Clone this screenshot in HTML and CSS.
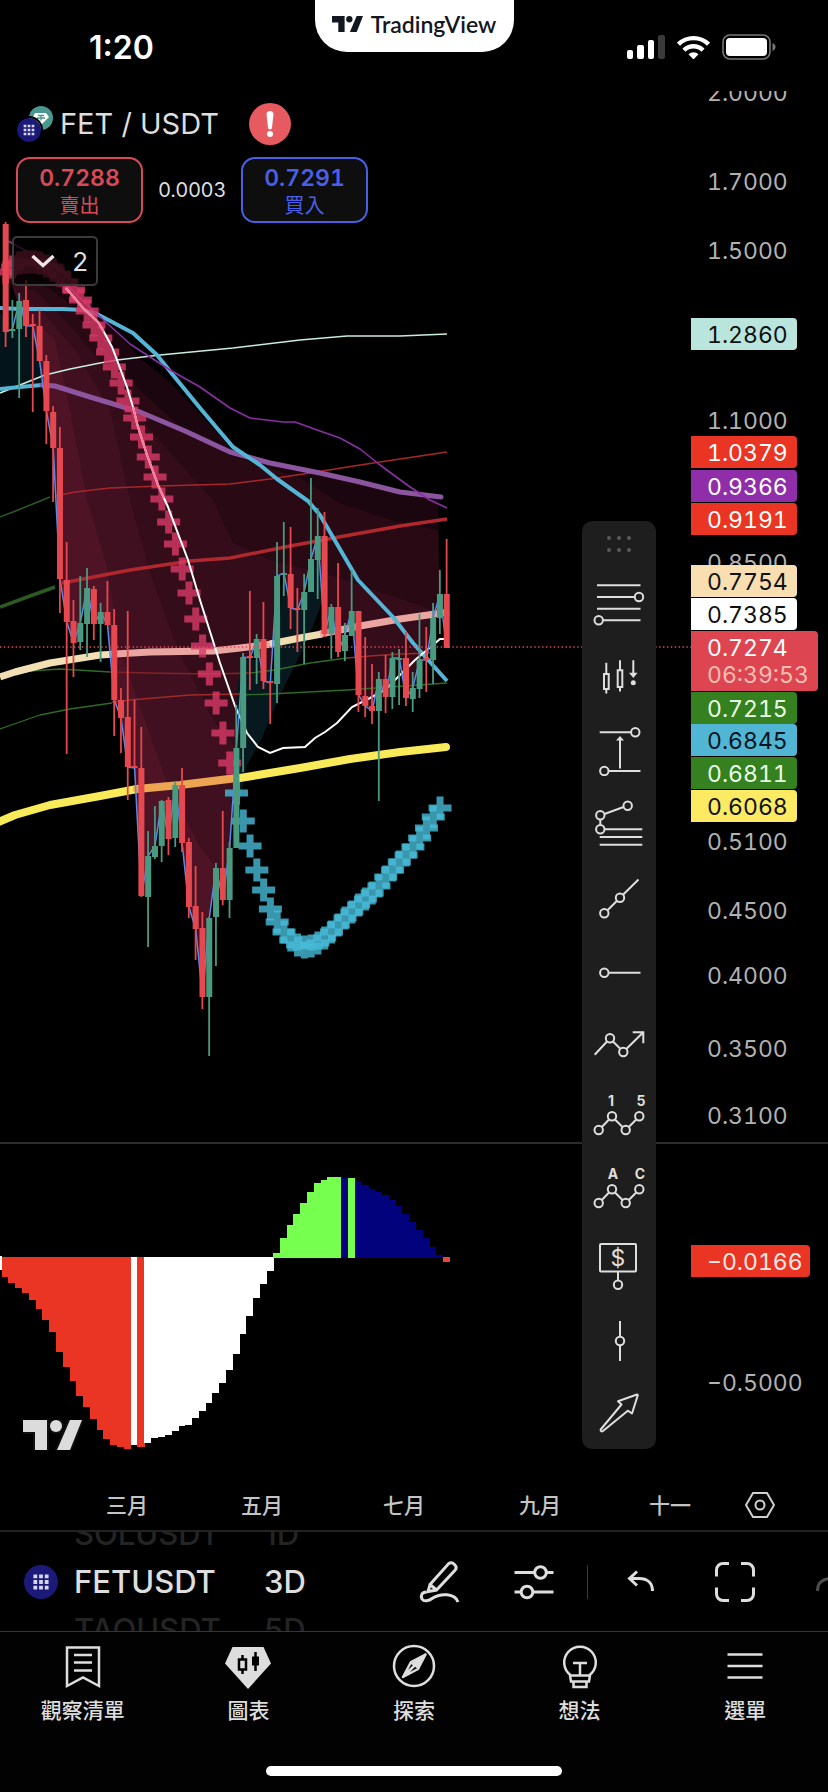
FILE: index.html
```
<!DOCTYPE html>
<html lang="zh-Hant">

<head>
  <meta charset="UTF-8">
  <meta name="viewport" content="width=device-width, initial-scale=1">
  <title>FET / USDT</title>
  <link rel="stylesheet" href="styles.css">
</head>

<body>
  <svg class="defs" aria-hidden="true">
    <symbol id="tv" viewBox="0 0 59 30">
      <path d="M0 0h24v30H12V12H0z" />
      <circle cx="33" cy="6" r="6" />
      <path d="M47 0h12L47 30H34z" />
    </symbol>
    <symbol id="fet" viewBox="0 0 36 36">
      <circle cx="18" cy="18" r="18" fill="#1c1a78" />
      <path d="M10 12h4m2 0h4m2 0h4M10 18h4m2 0h4m2 0h4M10 24h4m2 0h4m2 0h4" stroke="#d6d6f5" stroke-width="4" />
    </symbol>
  </svg>

  <header class="status">
    <time class="clock">1:20</time>
    <div class="island">
      <svg class="island-logo"><use href="#tv" /></svg>
      <span>TradingView</span>
    </div>
    <div class="signals">
      <svg width="38" height="24" viewBox="0 0 38 24" fill="#fff">
        <rect x="0" y="15" width="6" height="9" rx="2" />
        <rect x="10" y="10" width="7" height="14" rx="2" />
        <rect x="21" y="5" width="6" height="19" rx="2" />
        <rect x="31" y="0" width="7" height="24" rx="2" fill="#3a3a3a" />
      </svg>
      <svg width="33" height="24" viewBox="0 0 33 24" fill="none" stroke="#fff" stroke-width="4.4">
        <path d="M1.5 9.2a21.5 21.5 0 0 1 30 0" />
        <path d="M7 15.2a13.5 13.5 0 0 1 19 0" />
        <path d="M16.500 24.500l-5-5.200a7.200 7.200 0 0 1 10 0z" fill="#fff" stroke="none" />
      </svg>
      <svg width="54" height="26" viewBox="0 0 54 26">
        <rect x="1" y="1" width="47" height="24" rx="7" fill="none" stroke="#777" stroke-width="1.600" />
        <rect x="4" y="4" width="41" height="18" rx="4" fill="#fff" />
        <path d="M50.500 9c4 1.500 4 6.500 0 8z" fill="#777" />
      </svg>
    </div>
  </header>

  <main class="chart">
    <section class="pane pane-price">
      <svg class="plot" id="price-plot"></svg>
      <svg class="axis" id="price-axis"></svg>
    </section>
    <section class="pane pane-osc">
      <svg class="plot" id="osc-plot"></svg>
      <svg class="axis" id="osc-axis"></svg>
      <svg class="watermark"><use href="#tv" /></svg>
    </section>
    <section class="pane pane-time">
      <svg class="plot" id="time-axis"></svg>
      <button class="axis-settings" aria-label="設定">
        <svg width="30" height="26" viewBox="0 0 30 26" fill="none" stroke="#d0d0d0" stroke-width="2">
          <path d="M8 1h14l7 12-7 12H8L1 13z" />
          <circle cx="15" cy="13" r="4.500" />
        </svg>
      </button>
    </section>

    <div class="overlay">
      <div class="symbol">
        <span class="pair-icon">
          <svg class="usdt" viewBox="0 0 24 24">
            <circle cx="12" cy="12" r="12" fill="#4a9790" />
            <path d="M6 7h11l3 4-8 8-8-8z" fill="#fff" />
            <path d="M9 9.500h6M12 9.500v5M8 12h8" stroke="#4a9790" stroke-width="1.300" />
          </svg>
          <svg class="fet"><use href="#fet" /></svg>
        </span>
        <h1>FET / USDT</h1>
        <button class="alert" aria-label="警告">
          <svg width="42" height="42" viewBox="0 0 42 42">
            <circle cx="21" cy="21" r="21" fill="#e65a60" />
            <path d="M17.500 11.500a3.500 3.500 0 0 1 7 0L23 24.500a2 2 0 0 1-4 0z" fill="#fff" />
            <circle cx="21" cy="31" r="3" fill="#fff" />
          </svg>
        </button>
      </div>
      <div class="quotes">
        <button class="quote sell"><b>0.7288</b><span>賣出</span></button>
        <span class="spread">0.0003</span>
        <button class="quote buy"><b>0.7291</b><span>買入</span></button>
      </div>
      <button class="collapse">
        <svg width="24" height="14" viewBox="0 0 24 14" fill="none" stroke="#f0e4e8" stroke-width="3.500">
          <path d="M1.500 2L12 11.500 22.500 2" />
        </svg>
        2
      </button>
    </div>

    <aside class="drawbar">
      <svg class="grip" width="24" height="16" viewBox="0 0 24 16" fill="#5a5a5a">
        <circle cx="2" cy="2" r="2" /><circle cx="12" cy="2" r="2" /><circle cx="22" cy="2" r="2" />
        <circle cx="2" cy="14" r="2" /><circle cx="12" cy="14" r="2" /><circle cx="22" cy="14" r="2" />
      </svg>
      <button aria-label="斐波那契回撤"><svg viewBox="0 0 54 54">
        <path d="M5 10.300h43.500M5 22h37.500M5 33.700h43.500M11 45.300h37.500" />
        <circle cx="47" cy="22" r="4.200" /><circle cx="6.700" cy="45.300" r="4.200" />
      </svg></button>
      <button aria-label="K線形態"><svg viewBox="0 0 54 54">
        <path d="M14.300 13.700V25m0 15v4.500M12 25h4.700v15H12zM28 11.300v10M28 38v4.500M25.700 21.300h4.600V38h-4.600zM41.300 11.300V25" />
        <path class="solid" d="M37 23.700h8.600L41.300 29z" /><circle class="solid" cx="41.300" cy="33.700" r="2.500" />
      </svg></button>
      <button aria-label="價格範圍"><svg viewBox="0 0 54 54">
        <path d="M7.700 10.300H39M28 46.500V17M16.700 49h31.800" />
        <path class="solid" d="M24 18.500h8L28 14z" />
        <circle cx="43.300" cy="10.300" r="4.200" /><circle cx="12.300" cy="49" r="4.200" />
      </svg></button>
      <button aria-label="趨勢擴展"><svg viewBox="0 0 54 54">
        <path d="M12.500 18L31.500 11M8.300 23.500V29M12.700 33.300h37.600M7.700 41h42.600M7.700 48.700h42.600" />
        <circle cx="35.700" cy="9.700" r="4.200" /><circle cx="8.300" cy="19.300" r="4.200" /><circle cx="8.300" cy="33.300" r="4.200" />
      </svg></button>
      <button aria-label="射線"><svg viewBox="0 0 54 54">
        <path d="M15.500 40.200l9.500-9.500M31 24.700l15.500-15.200" />
        <circle cx="12.300" cy="43.300" r="4.200" /><circle cx="28" cy="27.700" r="4.200" />
      </svg></button>
      <button aria-label="水平射線"><svg viewBox="0 0 54 54">
        <path d="M16.500 29.700h32" /><circle cx="12.300" cy="29.700" r="4.200" />
      </svg></button>
      <button aria-label="路徑"><svg viewBox="0 0 54 54">
        <path d="M2.700 37.700L15 24.500M21 24.500l7.300 7.300M34.300 32l17-16.700M40.700 15.300h10.600v11" />
        <circle cx="18" cy="21.300" r="4.200" /><circle cx="31.300" cy="35" r="4.200" />
      </svg></button>
      <button aria-label="推動浪"><svg viewBox="0 0 54 54">
        <path d="M9.800 36l7.200-7.500M23 28.500l7.500 7.500M36.800 36l7.400-7.500" />
        <circle cx="6.700" cy="39" r="4.200" /><circle cx="20" cy="25.300" r="4.200" /><circle cx="33.700" cy="39" r="4.200" /><circle cx="47.300" cy="25.300" r="4.200" />
        <text x="19" y="15">1</text><text x="49" y="15">5</text>
      </svg></button>
      <button aria-label="修正浪"><svg viewBox="0 0 54 54">
        <path d="M9.800 36l7.200-7.500M23 28.500l7.500 7.500M36.800 36l7.400-7.500" />
        <circle cx="6.700" cy="39" r="4.200" /><circle cx="20" cy="25.300" r="4.200" /><circle cx="33.700" cy="39" r="4.200" /><circle cx="47.300" cy="25.300" r="4.200" />
        <text x="21" y="15">A</text><text x="48" y="15">C</text>
      </svg></button>
      <button aria-label="價格註釋"><svg viewBox="0 0 54 54">
        <rect x="8" y="6" width="36" height="27.500" rx="1" /><path d="M26 33.500v9" /><circle cx="26" cy="46.700" r="4.200" />
        <text class="dollar" x="26" y="28">$</text>
      </svg></button>
      <button aria-label="垂直線"><svg viewBox="0 0 54 54">
        <path d="M28 9v16M28 33v16" /><circle cx="28" cy="29" r="4.200" />
      </svg></button>
      <button aria-label="箭頭"><svg viewBox="0 0 54 54">
        <path stroke-linejoin="round" d="M8.700 44.500L29.500 19.500l-3.500-3.200 19-6.800q1 0 .700 1L40 28.500l-4.200-2.800L11 46q-1.500 1-2.300-.200z" />
      </svg></button>
    </aside>
  </main>

  <section class="toolbar">
    <svg class="coin"><use href="#fet" /></svg>
    <ul class="wheel wheel-symbol">
      <li>SOLUSDT</li>
      <li class="on">FETUSDT</li>
      <li>TAOUSDT</li>
    </ul>
    <ul class="wheel wheel-range">
      <li>1D</li>
      <li class="on">3D</li>
      <li>5D</li>
    </ul>
    <div class="tools">
      <button aria-label="繪圖"><svg viewBox="0 0 44 44">
        <path d="M12 24.500L30.500 3.800q3-2.300 6 .7t.3 6L18.500 30l-8.500 1.500zM12 24.500l6.500 5.500" />
        <path d="M8.500 32c-5 0-6 4-4.500 7 2 3 7 2 10-.500 9-6 23-5 26 3.500" />
      </svg></button>
      <button aria-label="指標設定"><svg viewBox="0 0 44 44">
        <path d="M2.500 12.500h20.500M34 12.500h7.500M2.500 32h7M21 32h20.500" />
        <circle cx="28.500" cy="12.500" r="5.800" /><circle cx="15" cy="32" r="5.800" />
      </svg></button>
      <span class="divider"></span>
      <button aria-label="復原"><svg viewBox="0 0 44 44">
        <path d="M18 11.500L10.500 18.500 18 25.500M10.500 18.500h9.500c8 0 13.500 4 13.500 12.500" />
      </svg></button>
      <button aria-label="全螢幕"><svg viewBox="0 0 44 44">
        <path d="M16 3.500H10A6.500 6.500 0 0 0 3.500 10v6.500M28 3.500h6a6.500 6.500 0 0 1 6.500 6.500v6.500M16 40.500H10A6.500 6.500 0 0 1 3.500 34v-6.500M28 40.500h6a6.500 6.500 0 0 0 6.500-6.500v-6.500" />
      </svg></button>
      <button class="faded" aria-label="重做"><svg viewBox="0 0 44 44">
        <path d="M26 11.500l7.500 7-7.500 7M33.500 18.500H24c-8 0-13.500 4-13.500 12.500" />
      </svg></button>
    </div>
  </section>

  <nav class="tabs">
    <a href="#watchlist">
      <svg viewBox="0 0 44 44"><path d="M6 3.500h32V42l-16-8.500L6 42zM13 11h18M13 18.500h18M13 26.500h18" /></svg>
      觀察清單
    </a>
    <a href="#chart">
      <svg viewBox="0 0 44 44">
        <path d="M6.500 3h31L45 19.500 22 45-1 19.500z" fill="#dedede" stroke="none" />
        <path d="M16.500 11v4.500m0 10V30M13 15.500h7v10h-7zM29.500 8v19" stroke="#000" stroke-width="2.500" />
        <path d="M26 12.500h7v9h-7z" fill="#000" stroke="none" />
      </svg>
      圖表
    </a>
    <a href="#explore">
      <svg viewBox="0 0 44 44">
        <circle cx="22" cy="22" r="20" />
        <path d="M33.500 10.500L19 18 11 33z M33.500 10.500L26 25 11 33z" stroke-width="2.500" stroke-linejoin="round" />
        <path d="M33.500 10.500L18 19.500l4 2.500 4 3z" fill="#dedede" stroke="none" />
      </svg>
      探索
    </a>
    <a href="#ideas">
      <svg viewBox="0 0 44 44"><path d="M13 31.500a15.800 15.800 0 1 1 18 0zM12 31.500h20l-1 6H13zM15.500 37.500h13V43h-13zM15 19h14M22 19v12" /></svg>
      想法
    </a>
    <a href="#menu">
      <svg viewBox="0 0 44 44"><path d="M4.500 10.500h35M4.500 22h35M4.500 33.500h35" /></svg>
      選單
    </a>
    <span class="home-bar"></span>
  </nav>

  <script src="chart.js"></script>
</body>

</html>
```
FILE: styles.css
```
* {
  box-sizing: border-box;
}

body {
  margin: 0;
  min-height: 100vh;
  display: flex;
  flex-direction: column;
  background: #000;
  color: #dedede;
  font-family: Inter, "Noto Sans CJK TC", sans-serif;
  overflow-x: hidden;
}

button {
  padding: 0;
  border: 0;
  background: none;
  color: inherit;
  font: inherit;
}

svg {
  display: block;
}

.defs {
  position: absolute;
  width: 0;
  height: 0;
}

/* status bar */
.status {
  display: grid;
  grid-template-columns: 1fr 199px 1fr;
  height: 91px;
}

.clock {
  padding: 28px 0 0 89px;
  font-size: 32px;
  line-height: 40px;
  font-weight: 600;
  color: #fff;
}

.island {
  display: flex;
  justify-content: center;
  align-items: center;
  gap: 8px;
  height: 52px;
  padding-bottom: 4px;
  border-radius: 0 0 32px 32px;
  background: #fff;
  color: #131722;
  font-family: Lato, sans-serif;
  font-size: 23px;
  font-weight: 600;
}

.island-logo {
  width: 31px;
  height: 16px;
  fill: #131722;
}

.signals {
  display: flex;
  justify-content: flex-end;
  align-items: center;
  gap: 12px;
  height: 94px;
  padding-right: 52px;
}

/* chart */
.chart {
  position: relative;
}

.pane {
  display: flex;
  position: relative;
}

.pane-price {
  height: 1053px;
  border-bottom: 2px solid #2c2c2c;
}

.pane-osc {
  height: 336px;
}

.pane-time {
  height: 50px;
}

.plot {
  flex: 1;
  min-width: 0;
  height: 100%;
}

#osc-plot {
  shape-rendering: crispEdges;
}

.axis {
  width: 137px;
  height: 100%;
}

.axis text {
  font-size: 23px;
  font-variant-numeric: tabular-nums;
  fill: #b2b2b2;
}

.pane-time text {
  font-size: 21px;
  font-weight: 500;
  fill: #c4c4c4;
  text-anchor: middle;
}

.axis-settings {
  width: 137px;
  height: 50px;
  display: grid;
  place-items: center;
}

.watermark {
  position: absolute;
  left: 23px;
  bottom: 30px;
  width: 59px;
  height: 30px;
  overflow: visible;
  fill: #dcdcdc;
  stroke: #101010;
  stroke-width: 4px;
  paint-order: stroke;
}

/* header over the chart */
.overlay {
  position: absolute;
  top: 11px;
  left: 12px;
}

.symbol {
  display: flex;
  align-items: center;
  height: 44px;
  padding-left: 5px;
}

.pair-icon {
  position: relative;
  width: 36px;
  height: 36px;
}

.usdt {
  position: absolute;
  top: 0;
  right: 0;
  width: 24px;
  height: 24px;
}

.fet {
  position: absolute;
  left: 0;
  bottom: 0;
  width: 24px;
  height: 24px;
  border-radius: 50%;
  box-shadow: 0 0 0 2px #000;
}

h1 {
  margin: 0 30px 0 7px;
  font-size: 29px;
  line-height: 40px;
  font-weight: 400;
}

.quotes {
  display: flex;
  align-items: center;
  margin: 11px 0 0 4px;
}

.quote {
  display: flex;
  flex-direction: column;
  align-items: center;
  justify-content: center;
  width: 127px;
  height: 66px;
  padding-top: 3px;
  border: 2px solid;
  border-radius: 14px;
  background: #0e0e0e;
}

.quote b {
  font-size: 23px;
  line-height: 28px;
  font-weight: 600;
  font-variant-numeric: tabular-nums;
}

.quote span {
  font-size: 20px;
  line-height: 28px;
}

.sell {
  color: #d94a58;
}

.buy {
  color: #4a5fe8;
}

.spread {
  width: 98px;
  font-size: 20px;
  text-align: center;
}

.collapse {
  display: flex;
  align-items: center;
  justify-content: space-between;
  width: 86px;
  height: 50px;
  margin-top: 13px;
  padding: 0 8px 0 17px;
  border: 2px solid #3c3a3b;
  border-radius: 5px;
  background: rgba(0, 0, 0, 0.72);
  font-size: 26px;
}

/* drawing tools */
.drawbar {
  position: absolute;
  top: 430px;
  right: 172px;
  display: flex;
  flex-direction: column;
  align-items: center;
  width: 74px;
  height: 928px;
  border-radius: 10px;
  background: #1e1e1e;
}

.grip {
  margin: 15px 0 13px;
}

.drawbar button {
  flex: 1;
  display: grid;
  place-items: center;
  width: 100%;
}

.drawbar button svg {
  width: 54px;
  height: 54px;
  fill: none;
  stroke: #dedede;
  stroke-width: 2px;
}

.drawbar .solid,
.drawbar text {
  fill: #dedede;
  stroke: none;
}

.drawbar text {
  font-size: 14px;
  font-weight: 700;
  text-anchor: middle;
}

.drawbar .dollar {
  font-size: 23px;
  font-weight: 400;
}

/* symbol wheel and chart tools */
.toolbar {
  display: flex;
  align-items: center;
  height: 102px;
  border-top: 2px solid #222;
  border-bottom: 1px solid #363636;
  overflow: hidden;
}

.coin {
  flex: none;
  width: 34px;
  height: 34px;
  margin: 0 16px 0 24px;
}

.wheel {
  flex: none;
  margin: 0;
  padding: 0;
  list-style: none;
  font-size: 31px;
  line-height: 48px;
  font-weight: 500;
  color: #242424;
}

.wheel .on {
  color: #dedede;
}

.wheel-symbol {
  width: 190px;
}

.wheel-range {
  width: 60px;
}

.tools {
  flex: 1;
  display: flex;
  align-items: center;
  justify-content: flex-end;
  margin-right: -48px;
}

.tools button {
  display: grid;
  place-items: center;
  width: 94px;
  height: 98px;
}

.tools svg {
  width: 44px;
  height: 44px;
  fill: none;
  stroke: #dedede;
  stroke-width: 3px;
}

.tools .faded {
  opacity: 0.35;
}

.divider {
  width: 1px;
  height: 34px;
  margin: 0 6px;
  background: #3a3a3a;
}

/* bottom tabs */
.tabs {
  position: relative;
  flex: 1;
  display: flex;
  padding-top: 12px;
  background: #020202;
}

.tabs a {
  flex: 1;
  display: flex;
  flex-direction: column;
  align-items: center;
  gap: 7px;
  height: 148px;
  color: inherit;
  text-decoration: none;
  font-size: 21px;
  line-height: 32px;
  font-weight: 500;
}

.tabs svg {
  width: 44px;
  height: 44px;
  overflow: visible;
  fill: none;
  stroke: #dedede;
  stroke-width: 2.5px;
}

.home-bar {
  position: absolute;
  left: 50%;
  bottom: 16px;
  width: 296px;
  height: 10px;
  margin-left: -148px;
  border-radius: 5px;
  background: #fff;
}
```
FILE: chart.js
```
const UP = "#4a9a82";
const DOWN = "#e5484f";
const STEP = 6.785;
const TOP = 91; // y of the chart's upper edge on screen

const barX = i => 5.7 + STEP * i;

// direction, high, body top, body bottom, low
const candles = [
  ["d", 222, 224, 332, 347], ["u", 300, 329, 331, 338], ["u", 293, 301, 329, 398], ["d", 280, 300, 326, 337],
  ["d", 314, 324, 326, 412], ["d", 310, 326, 361, 361], ["d", 355, 361, 411, 444], ["d", 406, 412, 448, 502],
  ["d", 427, 448, 579, 613], ["d", 542, 580, 622, 754], ["d", 600, 621, 643, 677], ["u", 576, 623, 642, 650],
  ["u", 568, 588, 624, 657], ["d", 586, 589, 624, 640], ["u", 603, 612, 624, 662], ["d", 581, 612, 625, 625],
  ["d", 609, 625, 700, 736], ["d", 688, 700, 718, 753], ["d", 611, 717, 767, 800], ["d", 700, 766, 768, 768],
  ["d", 727, 768, 896, 897], ["u", 831, 856, 897, 947], ["u", 806, 846, 857, 859], ["u", 800, 801, 846, 862],
  ["d", 797, 800, 839, 855], ["u", 782, 785, 838, 847], ["d", 768, 785, 843, 852], ["d", 838, 842, 907, 918],
  ["d", 866, 906, 929, 960], ["d", 912, 928, 997, 1009], ["u", 917, 918, 997, 1056], ["u", 863, 868, 917, 966],
  ["d", 811, 868, 900, 905], ["u", 842, 848, 900, 918], ["u", 705, 748, 848, 848], ["u", 653, 657, 748, 772],
  ["d", 591, 656, 658, 690], ["u", 634, 639, 658, 684], ["d", 602, 639, 681, 689], ["d", 681, 681, 683, 724],
  ["u", 542, 576, 684, 703], ["u", 522, 573, 575, 596], ["d", 527, 574, 608, 629], ["d", 588, 608, 610, 652],
  ["u", 574, 592, 610, 664], ["u", 478, 559, 592, 592], ["u", 508, 536, 560, 599], ["d", 512, 536, 634, 637],
  ["u", 604, 607, 634, 659], ["d", 563, 607, 652, 657], ["u", 623, 635, 651, 661], ["u", 570, 611, 636, 636],
  ["d", 611, 611, 695, 712], ["d", 637, 696, 706, 717], ["d", 664, 706, 711, 724], ["u", 672, 679, 711, 801],
  ["d", 655, 679, 697, 713], ["u", 652, 658, 697, 709], ["u", 649, 658, 660, 705], ["d", 632, 658, 698, 706],
  ["u", 672, 688, 699, 712], ["u", 614, 660, 689, 698], ["d", 627, 658, 660, 692], ["u", 603, 618, 660, 684],
  ["u", 570, 594, 618, 634], ["d", 539, 594, 648, 648]
];

const crosses = [
  272, 267, 263, 262, 262, 263, 266, 270, 275, 282, 290, 300, 311, 325, 338, 352, 367, 383, 401, 418, 437, 457,
  477, 499, 522, 544, 569, 593, 619, 646, 674, 703, 733, 763,
  793, 821, 846, 870, 890, 909, 922, 932, 940, 945, 947, 946, 943, 938, 932, 925, 918, 912, 905, 899, 893, 886,
  877, 870, 862, 855, 847, 838, 828, 817, 808
];

// moving averages: colour, width, points
const lines = [
  ["#c9ecdd", 1.7, "0,393 45,375 70,369 100,363 117,360 160,355 233,348 300,340 347,336 400,336 447,334"],
  ["#2b5a22", 1.5, "0,517 18,510 50,497"],
  ["#a8262a", 1.5, "55,496 75,492 110,488 160,486 230,484 270,479 310,473 360,465 400,459 447,452"],
  ["#2c5a22", 3.5, "0,607 30,596 55,587"],
  ["#b0282d", 3.5, "62,583 130,570 190,561 230,558 290,546 350,535 400,526 447,519"],
  ["#2f6b26", 1.3, "0,676 30,671 60,669 110,672"],
  ["#7e2427", 1.3, "110,672 150,673 210,674 250,673"],
  ["#2f6b26", 1.3, "250,673 275,670 310,663 347,658"],
  ["#9e2a2c", 1.3, "347,658 370,656 400,654 430,653"],
  ["#2f6b26", 1.3, "0,729 40,715 70,709 112,703"],
  ["#9e2a2c", 1.3, "112,702 130,700 190,695 240,694"],
  ["#2f6b26", 1.3, "240,695 270,694 347,690 447,683"],
  ["#f3dfb4", 7, "0,677 15,672 50,663 100,655 117,654"],
  ["#eaa5a0", 7, "115,654 150,652 213,651 240,648 272,644"],
  ["#efdcb2", 7, "270,644 300,638 322,634"],
  ["#eaa5a0", 7, "320,634 360,626 400,619 449,612"],
  ["#f9ea5a", 8, "-4,823 15,815 50,805 100,796 137,789"],
  ["#eea552", 8, "137,789 180,785 237,778"],
  ["#f9ea5a", 8, "240,778 300,768 350,759 400,752 446,747"],
  ["#55b5d6", 4, "0,389 20,387 42,385"],
  ["#8c55a0", 5, "42,385 55,386 90,397 140,412 185,431 230,452 270,463 320,473 360,482 400,492 441,497"],
  ["#55b5d6", 4, "0,308 20,309 63,309 83,310 97,314 133,333 157,355 173,375 200,408 233,447 260,465 277,479 308,501 320,515 358,580 393,617 413,643 447,681"],
  ["#8b2fa6", 1.6, "8,241 30,253 60,278 80,298 97,314 130,344 170,370 200,387 230,408 250,418 283,422 295,422 320,431 340,438 360,449 380,465 410,487 430,500 447,508"]
];

const whiteLine = "66,288 83,308 98,322 104,332 112,347 117,360 127,387 133,407 138,427 147,455 158,485 168,507 188,560 200,600 220,663 235,706 247,733 258,747 270,753 283,748 305,747 315,738 325,732 337,723 352,707 370,698 385,690 400,675 415,660 427,650 440,639 447,639";

// cloud layers between an average and the close, slowest first
const layers = [
  ["#1b0610", "8,250 40,252 65,268 100,315 140,358 170,382 210,425 245,454 300,470 360,483 438,498"],
  ["#290914", "8,262 30,275 65,300 100,345 140,390 185,431 230,455 300,478 340,503 400,523 438,530"],
  ["#350c1a", "8,275 40,295 70,325 100,362 150,430 190,475 213,500 233,543 270,560 337,577 438,612"],
  ["#401020", "15,290 45,315 75,350 110,410 130,500 150,573 177,647 213,720 236,748"],
  ["#4e1426", "25,312 55,340 68,400 87,500 107,567 120,650 167,783 200,847 216,868"]
];

const histogram = [
  412, 430, 445, 460, 480, 507, 540, 577, 637, 682, 724, 768, 800, 838, 870, 896, 914, 922, 927, 915, 922, 910,
  895, 890, 884, 872, 859, 855, 835, 812, 789, 760, 729, 689, 641, 583, 529, 475, 432, 392,
  340, 295, 255, 222, 188, 156, 129, 119, 112, 112, 113, 115, 124, 135, 148, 157, 165, 180, 198, 222, 245, 270,
  295, 322, 345, 366
];

// text, baseline, background, text colour
const priceLabels = [
  ["2.0000", 101], ["1.7000", 190], ["1.5000", 259], ["1.1000", 429], ["0.8500", 571], ["0.5100", 850],
  ["0.4500", 919], ["0.4000", 984], ["0.3500", 1057], ["0.3100", 1124],
  ["1.2860", 343, "#b9e5dc", "#101010"],
  ["1.0379", 461, "#ea3424", "#fff"],
  ["0.9366", 495, "#902eaa", "#fff"],
  ["0.9191", 528, "#ea3424", "#fff"],
  ["0.7754", 590, "#f9deb2", "#101010"],
  ["0.7385", 623, "#fff", "#101010"],
  ["0.7215", 717, "#35801f", "#e8ffe8"],
  ["0.6845", 749, "#51b6d3", "#0a1420"],
  ["0.6811", 782, "#35801f", "#e8ffe8"],
  ["0.6068", 815, "#fbea62", "#101010"]
];

const months = [["三月", 127], ["五月", 262], ["七月", 404], ["九月", 540], ["十一", 670]];

function histColor(i) {
  if (i == 65) return "#e8443a";
  if (i < 19 || i == 20) return "#ea3424";
  if (i < 40) return "#fff";
  if (i < 50 || i == 51) return "#77ff4f";
  return "#02027c";
}

function badge(y, w, h, fill) {
  return `<path d="M0 ${y}h${w - 4}q4 0 4 4v${h - 8}q0 4 -4 4H0z" fill="${fill}"/>`;
}

function label(text, base, fill) {
  return `<text x="16" y="${base}"${fill ? ` style="fill:${fill}"` : ""}>${text}</text>`;
}

function drawPrice() {
  const closes = candles.map((c, i) => `${barX(i).toFixed(1)},${c[0] == "u" ? c[2] : c[3]}`);
  let out = `<g transform="translate(0 ${-TOP})">`;

  out += `<polygon points="0,310 8,332 16,331 22,318 30,326 40,345 45,386 0,388" fill="#03141a"/>`;
  layers.forEach(([fill, top]) => {
    const last = Number(top.split(" ").pop().split(",")[0]);
    const under = closes.filter((c, i) => i > 2 && barX(i) <= last + 2).reverse().join(" ");
    out += `<polygon points="${top} ${under}" fill="${fill}"/>`;
  });
  out += `<polygon points="237,690 243,660 262,660 275,683 283,576 298,608 308,592 318,540 323,600 312,628 300,655 280,695 262,738 247,765 240,800 232,850" fill="#07191e"/>`;

  lines.forEach(([color, width, points]) => {
    const cap = width == 8 || width == 5 ? "round" : "butt";
    out += `<polyline points="${points}" fill="none" stroke="${color}" stroke-width="${width}" stroke-linejoin="round" stroke-linecap="${cap}"/>`;
  });

  crosses.forEach((y, i) => {
    const x = barX(i);
    const color = i < 34 ? "#d93a68" : "#47bcd8";
    out += `<path d="M${x - 3.4} ${y - 11.500}h7v8h8v7h-8v8h-7v-8h-8v-7h8z" fill="${color}" opacity="0.8"/>`;
  });

  out += `<polyline points="${whiteLine}" fill="none" stroke="#fff" stroke-width="2"/>`;
  out += `<polyline points="66,288 83,308 98,322 104,332" fill="none" stroke="#f77a9b" stroke-width="2"/>`;
  out += `<polyline points="133,407 138,427 147,455 158,485 164,498" fill="none" stroke="#f77a9b" stroke-width="2"/>`;
  out += `<polyline points="${closes.join(" ")}" fill="none" stroke="#5b8bea" stroke-width="1.5"/>`;

  candles.forEach(([dir, high, top, bottom, low], i) => {
    const x = barX(i);
    const color = dir == "u" ? UP : DOWN;
    out += `<path d="M${x - 1} ${high}h1.800V${low}h-1.800z" fill="${color}"/>`;
    out += `<rect x="${x - 3}" y="${top}" width="6" height="${bottom - top}" fill="${color}"/>`;
  });

  out += `<line x1="0" x2="100%" y1="647" y2="647" stroke="#dc4c5a" stroke-width="1.6" stroke-dasharray="1.4 2.5"/></g>`;
  document.querySelector("#price-plot").innerHTML = out;
}

function drawPriceAxis() {
  let out = `<g transform="translate(0 ${-TOP})">`;
  priceLabels.forEach(([text, base, bg, fg]) => {
    if (bg) out += badge(base - 25, 106, 32, bg);
    out += label(text, base, fg);
  });
  out += badge(631, 127, 60, "#dd4650") + label("0.7274", 656, "#fff") + label("06:39:53", 683, "#f6bdb4");
  document.querySelector("#price-axis").innerHTML = out + "</g>";
}

function drawOscillator() {
  let out = `<rect x="0" y="112" width="2" height="14" fill="#fff"/>`;
  histogram.forEach((v, i) => {
    const y = v / 3 - 4;
    const zero = i < 40 ? 112.5 : 114;
    const top = i == 65 ? 113 : Math.min(y, zero);
    const height = i == 65 ? 5 : Math.abs(y - zero);
    out += `<rect x="${barX(i) - 4}" y="${top}" width="7.200" height="${height}" fill="${histColor(i)}"/>`;
  });
  document.querySelector("#osc-plot").innerHTML = out;
  document.querySelector("#osc-axis").innerHTML =
    badge(101, 119, 32, "#ea3424") + label("−0.0166", 126, "#ffe9e2") + label("−0.5000", 247);
}

function drawMonths() {
  document.querySelector("#time-axis").innerHTML =
    months.map(([text, x]) => `<text x="${x}" y="33">${text}</text>`).join("");
}

drawPrice();
drawPriceAxis();
drawOscillator();
drawMonths();
```
